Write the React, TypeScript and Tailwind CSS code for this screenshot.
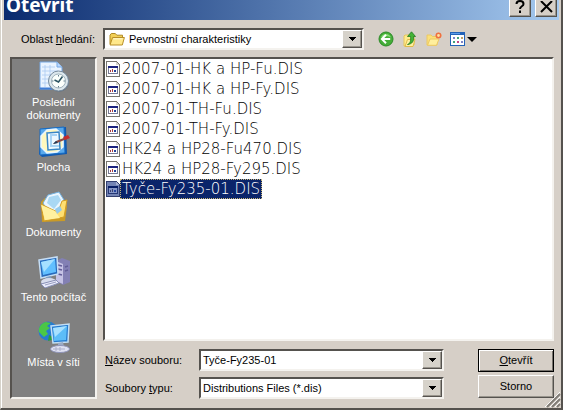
import React from "react";

const sunken =
  "border-2 border-t-[#55524e] border-l-[#55524e] border-r-[#f4f2ee] border-b-[#f4f2ee]";
const raised =
  "border border-t-white border-l-white border-r-[#55524e] border-b-[#55524e] shadow-[inset_-1px_-1px_0_#99958d]";

function Arrow() {
  return (
    <svg width="7" height="4" viewBox="0 0 7 4" shapeRendering="crispEdges" aria-hidden="true">
      <path d="M0 0h7v1H6v1H5v1H4v1H3V3H2V2H1V1H0z" fill="#000" />
    </svg>
  );
}

function FolderIcon() {
  return (
    <svg width="16" height="15" viewBox="0 0 16 15" aria-hidden="true">
      <path d="M1 12V3.2L2.3 1.5h4l1.5 1.7h5.7v2" fill="#f2cf55" stroke="#b08a25" />
      <path d="M1 13 3.6 5.5h11.8L13.3 13z" fill="#ffe88a" stroke="#b98f28" />
      <path d="M4.4 6.8h9.2" stroke="#fff8cf" />
    </svg>
  );
}

function BackIcon() {
  return (
    <svg width="16" height="16" viewBox="0 0 16 16" aria-hidden="true">
      <circle cx="8" cy="8" r="7" fill="#45ad38" stroke="#2c8a27" />
      <path d="M3 6.5a5.3 5.3 0 0 1 10 0C10 4.6 6 5 3 6.500z" fill="#8bdc76" />
      <path d="M8 3.800 3.900 8 8 12.200M4.200 8h8" fill="none" stroke="#fff" strokeWidth="2" />
    </svg>
  );
}

function UpFolderIcon() {
  return (
    <svg width="16" height="16" viewBox="0 0 16 16" aria-hidden="true">
      <path d="M2 15V5l1-1h4l1 1.500h4V14z" fill="#ffeb8c" stroke="#e6c65a" />
      <path d="m3 15.500 2.500-7H13l-2 7z" fill="#fff1a0" stroke="#e0bb4a" />
      <path d="M5.500 13.500C8.500 12.500 9 9 8.500 5.500H5.500L9.500.800l4 4.700H11.500c.6 4.500-1 7.500-6 8z" fill="#43b336" stroke="#217a22" strokeWidth=".8" />
    </svg>
  );
}

function NewFolderIcon() {
  return (
    <svg width="16" height="16" viewBox="0 0 16 16" aria-hidden="true">
      <path d="M1 14V4h4l1.500 1.500H11V14z" fill="#fbe07a" stroke="#ecc862" />
      <path d="m1.500 14.300 2.500-6.300h9L10.500 14.300z" fill="#ffef9d" stroke="#ecc862" />
      <circle cx="12.500" cy="4.500" r="2.200" fill="#ffe2a0" stroke="#ee7040" strokeWidth="1.600" />
      <path d="M12.500 1v1M16 4.500h-1M12.500 8V7M9 4.500h1" stroke="#f2a070" />
    </svg>
  );
}

function ViewsIcon() {
  return (
    <svg width="15" height="14" viewBox="0 0 15 14" shapeRendering="crispEdges" aria-hidden="true">
      <path d="M0 0h15v14H0z" fill="#2463b8" />
      <path d="M1 3h13v10H1z" fill="#fff" />
      <path d="M1 1h9v1H1z" fill="#5e9be8" />
      <path d="M3 5h2v2H3zM11 9h2v2h-2z" fill="#7f83c8" />
      <path d="M7 5h2v2H7zM3 9h2v2H3z" fill="#43a27b" />
      <path d="M11 5h2v2h-2z" fill="#c0a36b" />
      <path d="M7 9h2v2H7z" fill="#c64785" />
    </svg>
  );
}

function FileIcon({ selected = false }: { selected?: boolean }) {
  const paper = selected ? "#7484b5" : "#fff";
  return (
    <svg width="14" height="16" viewBox="0 0 14 16" shapeRendering="crispEdges" aria-hidden="true">
      <path d="M0 0h10l4 4v12H0z" fill={selected ? "#333f70" : "#77756f"} />
      <path d="M1 1h9v3h3v11H1z" fill={paper} />
      <path d="M10 1v3h3z" fill={selected ? "#a3aed0" : "#d5d3cc"} />
      <path d="M2 5h10v8H2z" fill={selected ? "#253775" : "#777a94"} />
      <path d="M3 7h8v5H3z" fill={selected ? "#8797c7" : "#fff"} />
      <path d="M2 5h10v2H2z" fill={selected ? "#071d65" : "#1b237e"} />
      <path d="M4 9h1v2H4zM6 8h1v3H6z" fill={selected ? "#39406f" : "#a6373e"} />
      <path d="M8 9h2v2H8z" fill="#24449c" />
    </svg>
  );
}

function RecentIcon() {
  return (
    <svg width="32" height="32" viewBox="0 0 32 32" aria-hidden="true">
      <path d="M2 1h17l5 5v22H2z" fill="#eaf4ff" stroke="#76a8e3" />
      <path d="M19 1v5h5" fill="#b9d8ff" stroke="#76a8e3" />
      <path d="M4 6h13M4 10h16M4 14h15M4 18h15M4 22h15M7 4v22M12 4v22" stroke="#abcaf1" strokeWidth=".8" />
      <path d="M1.500 26.500h22v2h-22z" fill="#3f7dd6" />
      <circle cx="21" cy="21" r="10" fill="#687481" />
      <circle cx="20.500" cy="20" r="10" fill="#dce7ec" stroke="#778b9d" />
      <circle cx="20.500" cy="20" r="7" fill="#fbfffc" stroke="#9fb1bb" />
      <path d="M20.500 14v1.500M20.500 25v1.500M14 20h1.500M25.500 20H27" stroke="#607e8d" />
      <path d="m16.500 19 4 2 4-5.500" fill="none" stroke="#2a5361" strokeWidth="1.500" />
    </svg>
  );
}

function DesktopIcon() {
  return (
    <svg width="32" height="32" viewBox="0 0 32 32" aria-hidden="true">
      <path d="m3 3 25-2 1 27-25 3-3-3z" fill="#1259ae" />
      <path d="m2 3 24-2 1 26-25 2z" fill="#59a9ec" stroke="#166bc3" />
      <path d="m9 4 9-1 7 6v12l-6 5-10 1-6-6V10z" fill="#fff8bd" stroke="#e9f6ff" strokeWidth="1.500" />
      <path d="m9 7 12-1 1 17-12 1z" fill="#eef9ff" stroke="#3986c6" strokeWidth="1.500" />
      <path d="M19 9h-6v11h8" fill="none" stroke="#a9d4f4" strokeWidth="2" />
      <path d="m15 18 3-3 9-3.500 2 1.500-10 4z" fill="#8b4b47" />
      <path d="m15 18 3-3 2 2z" fill="#193b5b" />
      <path d="m25 11 5-2 2 3-5 2z" fill="#c42c2d" />
    </svg>
  );
}

function DocumentsIcon() {
  return (
    <svg width="32" height="32" viewBox="0 0 32 32" aria-hidden="true">
      <path d="M3 11 7 7l5 3h13l4 5-2 15-23 1z" fill="#ca9b26" />
      <path d="m10 4 11-3 5 8-8 15-8-3-5-9z" fill="#eaf6ff" stroke="#73b1df" />
      <path d="m11 6 9-2 3 5-7 9-7-6z" fill="#a9d8f4" />
      <path d="m3 13 10 5 7 3 4-11 5-1-3 17-20 4z" fill="#ffdf70" stroke="#d39e24" />
      <path d="m3 14 4 15 15-2-5-7z" fill="#fff1a0" />
      <path d="m17 18 5-3 2 4-5 4z" fill="#94caec" />
    </svg>
  );
}

function ComputerIcon() {
  return (
    <svg width="32" height="32" viewBox="0 0 32 32" aria-hidden="true">
      <path d="m18 5 6-3 8 3v21l-7 3-7-4z" fill="#8380b4" />
      <path d="m18 5 7 3v20l-7-3z" fill="#c5c2e5" />
      <path d="m20 9 4 1M20 13l4 1M20 18l4 1M27 11l3-1M27 15l3-1" stroke="#625d98" strokeWidth="1.500" />
      <path d="m1 4 18-3 1 17-17 4z" fill="#286bbd" stroke="#c6def5" strokeWidth="1.500" />
      <path d="m3 6 14-3 1 13-13 3z" fill="#61bfff" />
      <path d="m3 6 14-3-11 13z" fill="#a7e0ff" />
      <path d="m8 21 5-1 1 5H8z" fill="#7e9dc1" />
      <ellipse cx="11" cy="26" rx="8" ry="4" fill="#d7dced" />
      <path d="m3 28 15-4 3 3-14 5z" fill="#e8eafa" stroke="#878eb5" />
      <path d="m7 29 11-3" stroke="#989ec1" />
    </svg>
  );
}

function NetworkIcon() {
  return (
    <svg width="32" height="32" viewBox="0 0 32 32" aria-hidden="true">
      <circle cx="10" cy="10" r="9.500" fill="#257bd2" />
      <path d="M8 1c-5 1-8 6-7 10l5 5 4-3-2-3 4-3-3-2 4-3z" fill="#4bc746" />
      <path d="m11 14 4 2-1 3-4 1z" fill="#2d9a42" />
      <path d="m13 5 18-2-1 18-15 1z" fill="#287bcf" stroke="#c2dff5" strokeWidth="1.500" />
      <path d="m15 7 14-2-1 14-12 1z" fill="#5cbdf8" />
      <path d="m15 7 14-2-12 11z" fill="#a8e1ff" />
      <path d="m20 22 5-1 1 5h-6z" fill="#9cabc4" />
      <ellipse cx="22" cy="28" rx="9.500" ry="3.500" fill="#dfe1f2" stroke="#8f94b9" />
      <path d="M15 28h12M18 26v4M22 26v4" stroke="#aaaec9" />
    </svg>
  );
}

const places = [
  { label: "Poslední dokumenty", Icon: RecentIcon },
  { label: "Plocha", Icon: DesktopIcon },
  { label: "Dokumenty", Icon: DocumentsIcon },
  { label: "Tento počítač", Icon: ComputerIcon },
  { label: "Místa v síti", Icon: NetworkIcon },
];

const files = [
  "2007-01-HK a HP-Fu.DIS",
  "2007-01-HK a HP-Fy.DIS",
  "2007-01-TH-Fu.DIS",
  "2007-01-TH-Fy.DIS",
  "HK24 a HP28-Fu470.DIS",
  "HK24 a HP28-Fy295.DIS",
  "Tyče-Fy235-01.DIS",
];

function DropButton() {
  return (
    <span className={`pointer-events-none absolute inset-y-0 right-0 flex w-5 items-center justify-center bg-[#d6d2ca] ${raised}`}>
      <Arrow />
    </span>
  );
}

export default function App() {
  return (
    <main className="relative w-full border-r-2 border-b-2 border-l border-r-[#55524e] border-b-[#55524e] border-l-[#d6d2ca] bg-[#d6cfc7] font-['Liberation_Sans',Arial,sans-serif] text-[11px] leading-[13px] text-black">
      <div className="border-l border-white pb-[9px]">
        <header className="mr-0.5 ml-0.5 flex h-5 items-end overflow-hidden bg-linear-to-r from-[#0b2a6e] to-[#a6caf0] pr-0.5 pl-0.5">
          <h1 className="flex-1 pb-[5px] font-['Noto_Sans','Open_Sans',sans-serif] text-[19px] leading-5 font-bold text-white">Otevřít</h1>
          <div className="flex gap-1 pb-[3px]">
            <button aria-label="Nápověda" className={`flex h-5 w-[22px] items-center justify-center bg-[#d6cfc7] ${raised}`}>
              <svg width="10" height="14" viewBox="0 0 10 14" aria-hidden="true">
                <path d="M1.500 4C1.500 0 8.500 0 8.500 4 8.500 6.500 5 6 5 9M5 10.500v2.500" fill="none" stroke="#000" strokeWidth="2" />
              </svg>
            </button>
            <button aria-label="Zavřít" className={`flex h-5 w-[22px] items-center justify-center bg-[#d6cfc7] ${raised}`}>
              <svg width="13" height="12" viewBox="0 0 13 12" aria-hidden="true">
                <path d="m1 0 11 11M12 0 1 11" stroke="#000" strokeWidth="2" />
              </svg>
            </button>
          </div>
        </header>

        <div className="flex items-center pt-2 pb-[7px]">
          <label htmlFor="folder" className="w-[101px] pr-2 text-right">Oblast <u>h</u>ledání:</label>
          <div className={`relative h-[22px] max-w-[261px] flex-1 bg-white ${sunken}`}>
            <select id="folder" className="block h-full w-full appearance-none bg-white pr-5 pl-6 outline-none">
              <option>Pevnostní charakteristiky</option>
            </select>
            <span className="pointer-events-none absolute inset-y-0 left-1 flex items-center"><FolderIcon /></span>
            <DropButton />
          </div>
          <div className="ml-3.5 flex items-center gap-2">
            <button aria-label="Zpět"><BackIcon /></button>
            <button aria-label="O úroveň výš"><UpFolderIcon /></button>
            <button aria-label="Nová složka"><NewFolderIcon /></button>
            <button aria-label="Zobrazit" className="flex items-center gap-0.5"><ViewsIcon />
              <svg width="10" height="5" viewBox="0 0 10 5" aria-hidden="true"><path d="M0 0h10L5 5z" /></svg>
            </button>
          </div>
        </div>

        <div className="flex gap-1.5 pr-[7px] pl-2">
          <nav className={`w-[87px] shrink-0 bg-[#808080] pt-0.5 ${sunken}`}>
            {places.map(({ label, Icon }) => (
              <button key={label} className="flex h-[65px] w-full flex-col items-center gap-[3px] px-2 text-white">
                <Icon />
                <span className="-mx-2 max-w-[75px]">{label}</span>
              </button>
            ))}
          </nav>

          <div className="min-w-0 flex-1">
            <ul role="listbox" aria-label="Soubory" className={`min-h-[284px] bg-white ${sunken}`}>
              {files.map((name, i) => {
                const selected = i === files.length - 1;
                return (
                  <li key={name} role="option" aria-selected={selected} className="flex h-5 items-center pl-px">
                    <FileIcon selected={selected} />
                    <span className={`border border-dotted px-px font-['DejaVu_Sans_Light','DejaVu_Sans',sans-serif] text-[15px] leading-[18px] font-extralight whitespace-nowrap ${selected ? "border-[#c9b676] bg-[#0a246a] text-white" : "border-transparent"}`}>{name}</span>
                  </li>
                );
              })}
            </ul>

            <form className="mt-2 flex items-start justify-between" onSubmit={(e) => e.preventDefault()}>
              <div className="grid max-w-[341px] flex-1 grid-cols-[96px_1fr] items-center gap-y-1.5">
                <label htmlFor="name" className="pl-0.5"><u>N</u>ázev souboru:</label>
                <div className={`relative h-[22px] bg-white ${sunken}`}>
                  <input id="name" defaultValue="Tyče-Fy235-01" className="block h-full w-full bg-white pr-5 pl-0.5 outline-none" />
                  <DropButton />
                </div>
                <label htmlFor="type" className="pl-0.5">Soubory <u>t</u>ypu:</label>
                <div className={`relative h-[22px] bg-white ${sunken}`}>
                  <select id="type" className="block h-full w-full appearance-none bg-white pr-5 pl-0.5 outline-none">
                    <option>Distributions Files (*.dis)</option>
                  </select>
                  <DropButton />
                </div>
              </div>
              <div className="flex w-[76px] flex-col gap-[3px]">
                <button type="submit" className="h-[23px] border border-black shadow-[inset_1px_1px_0_#fff,inset_-1px_-1px_0_#77736d]"><u>O</u>tevřít</button>
                <button type="button" className={`h-[23px] ${raised}`}>Storno</button>
              </div>
            </form>
          </div>
        </div>
      </div>
      <svg className="absolute right-0 bottom-0" width="16" height="16" viewBox="0 0 16 16" aria-hidden="true">
        <path d="M0 15 15 0M5 15 15 5M10 15 15 10" stroke="#fff" />
        <path d="M2 15 15 2M7 15 15 7M12 15 15 12" stroke="#817d77" strokeWidth="2" />
      </svg>
    </main>
  );
}
